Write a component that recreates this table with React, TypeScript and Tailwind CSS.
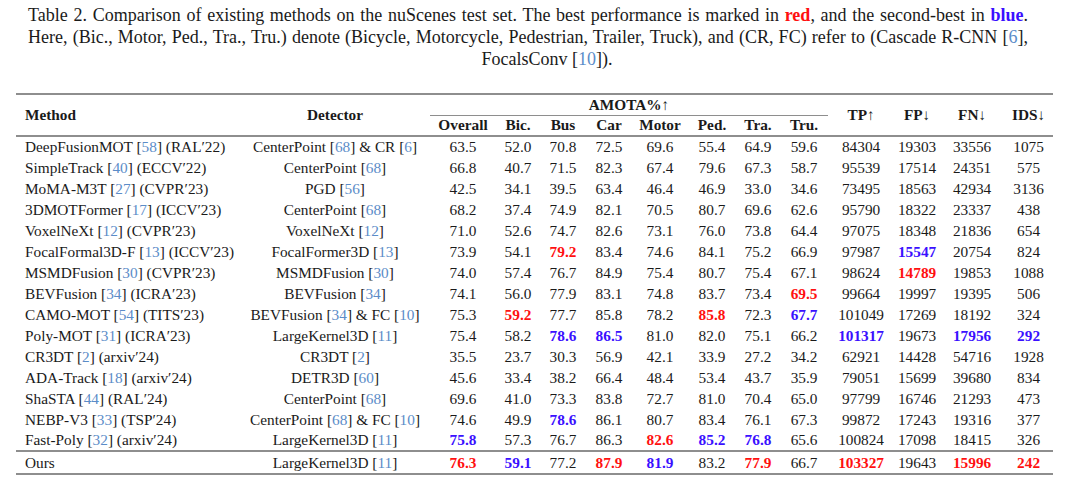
import React from "react";

type Row = { m: string; d: string; a: string[]; c: string[] };

const rows: Row[] = [
  { m: "DeepFusionMOT [58] (RAL′22)", d: "CenterPoint [68] & CR [6]", a: ["63.5", "52.0", "70.8", "72.5", "69.6", "55.4", "64.9", "59.6"], c: ["84304", "19303", "33556", "1075"] },
  { m: "SimpleTrack [40] (ECCV′22)", d: "CenterPoint [68]", a: ["66.8", "40.7", "71.5", "82.3", "67.4", "79.6", "67.3", "58.7"], c: ["95539", "17514", "24351", "575"] },
  { m: "MoMA-M3T [27] (CVPR′23)", d: "PGD [56]", a: ["42.5", "34.1", "39.5", "63.4", "46.4", "46.9", "33.0", "34.6"], c: ["73495", "18563", "42934", "3136"] },
  { m: "3DMOTFormer [17] (ICCV′23)", d: "CenterPoint [68]", a: ["68.2", "37.4", "74.9", "82.1", "70.5", "80.7", "69.6", "62.6"], c: ["95790", "18322", "23337", "438"] },
  { m: "VoxelNeXt [12] (CVPR′23)", d: "VoxelNeXt [12]", a: ["71.0", "52.6", "74.7", "82.6", "73.1", "76.0", "73.8", "64.4"], c: ["97075", "18348", "21836", "654"] },
  { m: "FocalFormal3D-F [13] (ICCV′23)", d: "FocalFormer3D [13]", a: ["73.9", "54.1", "r79.2", "83.4", "74.6", "84.1", "75.2", "66.9"], c: ["97987", "b15547", "20754", "824"] },
  { m: "MSMDFusion [30] (CVPR′23)", d: "MSMDFusion [30]", a: ["74.0", "57.4", "76.7", "84.9", "75.4", "80.7", "75.4", "67.1"], c: ["98624", "r14789", "19853", "1088"] },
  { m: "BEVFusion [34] (ICRA′23)", d: "BEVFusion [34]", a: ["74.1", "56.0", "77.9", "83.1", "74.8", "83.7", "73.4", "r69.5"], c: ["99664", "19997", "19395", "506"] },
  { m: "CAMO-MOT [54] (TITS′23)", d: "BEVFusion [34] & FC [10]", a: ["75.3", "r59.2", "77.7", "85.8", "78.2", "r85.8", "72.3", "b67.7"], c: ["101049", "17269", "18192", "324"] },
  { m: "Poly-MOT [31] (ICRA′23)", d: "LargeKernel3D [11]", a: ["75.4", "58.2", "b78.6", "b86.5", "81.0", "82.0", "75.1", "66.2"], c: ["b101317", "19673", "b17956", "b292"] },
  { m: "CR3DT [2] (arxiv′24)", d: "CR3DT [2]", a: ["35.5", "23.7", "30.3", "56.9", "42.1", "33.9", "27.2", "34.2"], c: ["62921", "14428", "54716", "1928"] },
  { m: "ADA-Track [18] (arxiv′24)", d: "DETR3D [60]", a: ["45.6", "33.4", "38.2", "66.4", "48.4", "53.4", "43.7", "35.9"], c: ["79051", "15699", "39680", "834"] },
  { m: "ShaSTA [44] (RAL′24)", d: "CenterPoint [68]", a: ["69.6", "41.0", "73.3", "83.8", "72.7", "81.0", "70.4", "65.0"], c: ["97799", "16746", "21293", "473"] },
  { m: "NEBP-V3 [33] (TSP′24)", d: "CenterPoint [68] & FC [10]", a: ["74.6", "49.9", "b78.6", "86.1", "80.7", "83.4", "76.1", "67.3"], c: ["99872", "17243", "19316", "377"] },
  { m: "Fast-Poly [32] (arxiv′24)", d: "LargeKernel3D [11]", a: ["b75.8", "57.3", "76.7", "86.3", "r82.6", "b85.2", "b76.8", "65.6"], c: ["100824", "17098", "18415", "326"] },
];

const ours: Row = { m: "Ours", d: "LargeKernel3D [11]", a: ["r76.3", "b59.1", "77.2", "r87.9", "b81.9", "83.2", "r77.9", "66.7"], c: ["r103327", "19643", "r15996", "r242"] };

function Cite({ text }: { text: string }) {
  const parts = text.split(/\[(\d+)\]/);
  return (
    <>
      {parts.map((p, i) =>
        i % 2 === 1 ? (
          <span key={i}>
            [<span className="text-[#5b8cc8]">{p}</span>]
          </span>
        ) : (
          <span key={i}>{p}</span>
        )
      )}
    </>
  );
}

function Val({ v }: { v: string }) {
  if (v.startsWith("r")) return <span className="font-bold text-[#ff1010]">{v.slice(1)}</span>;
  if (v.startsWith("b")) return <span className="font-bold text-[#3a10ff]">{v.slice(1)}</span>;
  return <span>{v}</span>;
}

function DataRow({ r, cls }: { r: Row; cls: string }) {
  return (
    <tr className={cls}>
      <td className="pl-[9px] text-left whitespace-nowrap p-0">
        <Cite text={r.m} />
      </td>
      <td className="text-center whitespace-nowrap p-0">
        <Cite text={r.d} />
      </td>
      {r.a.map((v, i) => (
        <td key={"a" + i} className="text-center p-0">
          <Val v={v} />
        </td>
      ))}
      {r.c.map((v, i) => (
        <td key={"c" + i} className="text-center p-0">
          <Val v={v} />
        </td>
      ))}
    </tr>
  );
}

export default function App() {
  return (
    <div className="w-[1080px] h-[485px] bg-white text-[#1a1a1a] overflow-hidden font-['Liberation_Serif','Times_New_Roman',serif]">
      <div className="pt-[4px] text-[18px] leading-[22px]">
        <div className="ml-[28px] w-[1000px] text-justify [text-align-last:justify]">
          Table 2. Comparison of existing methods on the nuScenes test set. The best performance is marked in{" "}
          <span className="font-bold text-[#ff1010]">red</span>, and the second-best in{" "}
          <span className="font-bold text-[#3a10ff]">blue</span>.
        </div>
        <div className="ml-[28px] w-[1000px] text-justify [text-align-last:justify]">
          Here, (Bic., Motor, Ped., Tra., Tru.) denote (Bicycle, Motorcycle, Pedestrian, Trailer, Truck), and (CR, FC) refer to (Cascade R-CNN [<span className="text-[#5b8cc8]">6</span>],
        </div>
        <div className="ml-[66px] w-[962px] text-center">
          FocalsConv [<span className="text-[#5b8cc8]">10</span>]).
        </div>
      </div>

      <div className="ml-[16px] mt-[23px] w-[1037px] text-[15.3px] leading-[18px]">
        <table className="table-fixed border-collapse w-[1037px]">
          <colgroup>
            <col className="w-[224px]" />
            <col className="w-[190px]" />
            <col className="w-[66px]" />
            <col className="w-[44px]" />
            <col className="w-[46px]" />
            <col className="w-[46px]" />
            <col className="w-[56px]" />
            <col className="w-[48px]" />
            <col className="w-[44px]" />
            <col className="w-[48px]" />
            <col className="w-[66px]" />
            <col className="w-[46px]" />
            <col className="w-[64px]" />
            <col className="w-[49px]" />
          </colgroup>
          <thead>
            <tr className="h-[21px] border-t-2 border-[#8e8e8e]">
              <th rowSpan={2} className="pl-[9px] text-left font-bold p-0">Method</th>
              <th rowSpan={2} className="text-center font-bold p-0">Detector</th>
              <th colSpan={8} className="text-center font-bold p-0 border-b border-[#8e8e8e]">
                AMOTA%↑
              </th>
              <th rowSpan={2} className="text-center font-bold p-0">TP↑</th>
              <th rowSpan={2} className="text-center font-bold p-0">FP↓</th>
              <th rowSpan={2} className="text-center font-bold p-0">FN↓</th>
              <th rowSpan={2} className="text-center font-bold p-0">IDS↓</th>
            </tr>
            <tr className="h-[21px]">
              {["Overall", "Bic.", "Bus", "Car", "Motor", "Ped.", "Tra.", "Tru."].map((t) => (
                <th key={t} className="text-center font-bold p-0">{t}</th>
              ))}
            </tr>
          </thead>
          <tbody className="border-t-2 border-[#8e8e8e]">
            {rows.map((r, i) => (
              <DataRow key={i} r={r} cls="h-[21px]" />
            ))}
            <DataRow r={ours} cls="h-[23px] border-t-2 border-b-2 border-[#8e8e8e]" />
          </tbody>
        </table>
      </div>
    </div>
  );
}
